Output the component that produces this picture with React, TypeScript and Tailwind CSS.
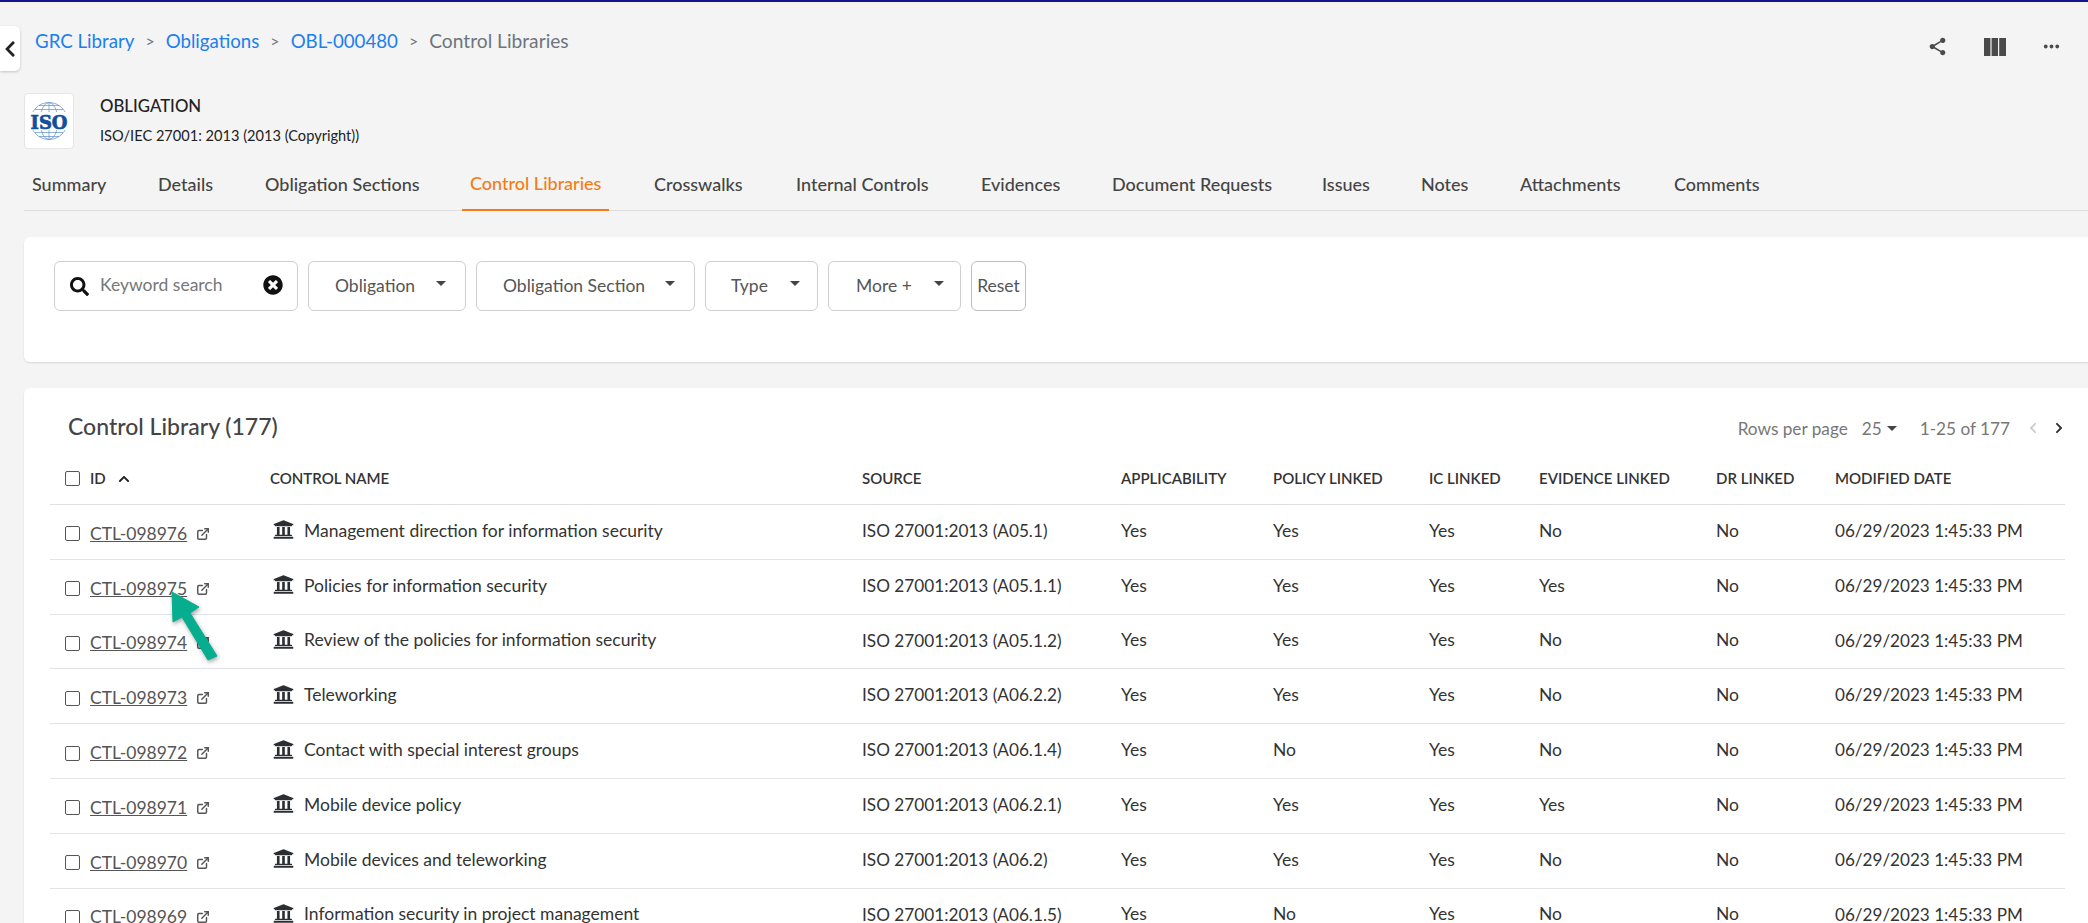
import React from "react";
import { FaUniversity, FaSearch, FaTimesCircle, FaChevronLeft, FaChevronRight, FaChevronUp } from "react-icons/fa";
import { MdShare, MdMoreHoriz } from "react-icons/md";
import { ExternalLink } from "lucide-react";

const cols = "grid grid-cols-[205px_592px_259px_152px_156px_110px_177px_119px_1fr] items-center";

const rows = [
  ["CTL-098976", "Management direction for information security", "ISO 27001:2013 (A05.1)", "Yes", "Yes", "Yes", "No", "No"],
  ["CTL-098975", "Policies for information security", "ISO 27001:2013 (A05.1.1)", "Yes", "Yes", "Yes", "Yes", "No"],
  ["CTL-098974", "Review of the policies for information security", "ISO 27001:2013 (A05.1.2)", "Yes", "Yes", "Yes", "No", "No"],
  ["CTL-098973", "Teleworking", "ISO 27001:2013 (A06.2.2)", "Yes", "Yes", "Yes", "No", "No"],
  ["CTL-098972", "Contact with special interest groups", "ISO 27001:2013 (A06.1.4)", "Yes", "No", "Yes", "No", "No"],
  ["CTL-098971", "Mobile device policy", "ISO 27001:2013 (A06.2.1)", "Yes", "Yes", "Yes", "Yes", "No"],
  ["CTL-098970", "Mobile devices and teleworking", "ISO 27001:2013 (A06.2)", "Yes", "Yes", "Yes", "No", "No"],
  ["CTL-098969", "Information security in project management", "ISO 27001:2013 (A06.1.5)", "Yes", "No", "Yes", "No", "No"],
];

const tabs = [
  ["Summary", "w-[126px]"],
  ["Details", "w-[107px]"],
  ["Obligation Sections", "w-[205px]"],
  ["Control Libraries", "w-[184px]"],
  ["Crosswalks", "w-[142px]"],
  ["Internal Controls", "w-[185px]"],
  ["Evidences", "w-[131px]"],
  ["Document Requests", "w-[210px]"],
  ["Issues", "w-[99px]"],
  ["Notes", "w-[99px]"],
  ["Attachments", "w-[154px]"],
  ["Comments", "w-[120px]"],
];

function Caret() {
  return <span className="block w-0 h-0 border-l-[5px] border-r-[5px] border-t-[5px] border-l-transparent border-r-transparent border-t-[#444]" />;
}

function FilterBtn({ label, w, pl, gap }: { label: string; w: string; pl: string; gap: string }) {
  return (
    <div className={`${w} ${pl} h-[50px] flex items-center bg-white border border-[#cfcfcf] rounded-[6px] text-[17.5px] text-[#555]`}>
      <span className={gap}>{label}</span>
      <span className="mb-[5px]"><Caret /></span>
    </div>
  );
}

function Box() {
  return <span className="w-[15px] h-[15px] border-[1.5px] border-[#555] rounded-[2px] shrink-0 bg-white" />;
}

function IsoLogo() {
  return (
    <svg width="38" height="40" viewBox="0 0 38 40">
      <g fill="none" stroke="#5b8fc9" strokeWidth="0.7">
        <circle cx="19" cy="20" r="18.5" />
        <ellipse cx="19" cy="20" rx="9" ry="18.5" />
        <path d="M19 1.5v37M5 8.5h28M5 31.5h28M9 4.5h20M9 35.5h20" />
      </g>
      <rect x="0" y="11" width="38" height="18" fill="#fff" />
      <text x="19" y="27.5" textAnchor="middle" fontFamily="'DejaVu Serif', serif" fontWeight="900" fontSize="19" fill="#0f4f9c" stroke="#0f4f9c" strokeWidth="0.7" textLength="37" lengthAdjust="spacingAndGlyphs">ISO</text>
    </svg>
  );
}

export default function App() {
  return (
    <div className="relative h-[923px] overflow-hidden bg-[#f4f4f4] border-t-2 border-[#14148a] font-['Lato',sans-serif]">
      <div className="h-[91px] flex items-start">
        <div className="mt-[24px] w-[20px] h-[45px] bg-white rounded-r-[5px] shadow-[0_1px_3px_rgba(0,0,0,0.2)] flex items-center justify-center text-[#222]">
          <FaChevronLeft size={18} />
        </div>
        <div className="ml-[15px] mt-[27px] flex items-center text-[18.7px] leading-[24px]">
          <span className="text-[#1a7ff0]">GRC Library</span>
          <span className="mx-[11px] text-[#6c757d] text-[16px]">&gt;</span>
          <span className="text-[#1a7ff0]">Obligations</span>
          <span className="mx-[11px] text-[#6c757d] text-[16px]">&gt;</span>
          <span className="text-[#1a7ff0]">OBL-000480</span>
          <span className="mx-[11px] text-[#6c757d] text-[16px]">&gt;</span>
          <span className="text-[#6c757d] text-[19.2px]">Control Libraries</span>
        </div>
        <div className="ml-auto mt-[33px] mr-[25px] flex items-center text-[#4a4a4a]">
          <MdShare size={21} />
          <svg className="ml-[36px]" width="22" height="18" viewBox="0 0 22 18" fill="#4a4a4a">
            <rect x="0" y="0" width="6.4" height="18" />
            <rect x="7.6" y="0" width="6.4" height="18" />
            <rect x="15.2" y="0" width="6.8" height="18" />
          </svg>
          <span className="ml-[34px]"><MdMoreHoriz size={23} /></span>
        </div>
      </div>

      <div className="ml-[24px] h-[55px] flex items-center">
        <div className="w-[50px] h-[56px] bg-white border border-[#e6e6e6] rounded-[4px] flex items-center justify-center">
          <IsoLogo />
        </div>
        <div className="ml-[26px] text-[#222]">
          <div className="text-[16.8px] leading-[20px] font-medium">OBLIGATION</div>
          <div className="mt-[11px] text-[14.6px] leading-[18px]">ISO/IEC 27001: 2013 (2013 (Copyright))</div>
        </div>
      </div>

      <div className="ml-[24px] mt-[10px] h-[53px] flex border-b border-[#dedede] text-[18px] font-medium text-[#444]">
        {tabs.map(([t, w]) => (
          <div key={t} className={`${w} shrink-0 h-[53px]`}>
            <div className={`inline-flex items-center h-[53px] px-[8px] ${t === "Control Libraries" ? "text-[#f57c14] border-b-2 border-[#f57c14]" : ""}`}>{t}</div>
          </div>
        ))}
      </div>

      <div className="ml-[24px] mt-[26px] h-[125px] bg-white rounded-l-[6px] shadow-[0_1px_2px_rgba(0,0,0,0.12)] pt-[24px] pl-[30px] flex items-start gap-[10px]">
        <div className="w-[244px] h-[50px] border border-[#cfcfcf] rounded-[6px] flex items-center pl-[15px] pr-[14px] text-[#111]">
          <FaSearch size={19} />
          <span className="ml-[11px] text-[17.5px] text-[#777] mb-[1px]">Keyword search</span>
          <span className="ml-auto mb-[3px]"><FaTimesCircle size={20} /></span>
        </div>
        <FilterBtn label="Obligation" w="w-[158px]" pl="pl-[26px]" gap="mr-[21px]" />
        <FilterBtn label="Obligation Section" w="w-[219px]" pl="pl-[26px]" gap="mr-[20px]" />
        <FilterBtn label="Type" w="w-[113px]" pl="pl-[25px]" gap="mr-[22px]" />
        <FilterBtn label="More +" w="w-[133px]" pl="pl-[27px]" gap="mr-[22px]" />
        <div className="w-[55px] h-[50px] border border-[#bdbdbd] rounded-[6px] flex items-center justify-center text-[17.5px] text-[#555]">Reset</div>
      </div>

      <div className="ml-[24px] mt-[26px] h-[600px] bg-white rounded-l-[6px] shadow-[0_1px_2px_rgba(0,0,0,0.12)] pl-[26px] pr-[23px]">
        <div className="h-[65px] flex items-center pl-[18px] pt-[12px]">
          <span className="text-[23px] font-medium text-[#444]">Control Library (177)</span>
          <div className="ml-auto mt-[4px] flex items-center text-[17.2px] text-[#777]">
            <span>Rows per page</span>
            <span className="ml-[14px]">25</span>
            <span className="ml-[5px]"><Caret /></span>
            <span className="ml-[23px]">1-25 of 177</span>
            <FaChevronLeft size={12} className="ml-[17px] text-[#ccc]" />
            <FaChevronRight size={12} className="ml-[14px] text-[#333]" />
          </div>
        </div>
        <div className={`${cols} h-[52px] pl-[15px] border-b border-[#dfdfe6] text-[15px] font-semibold text-[#333]`}>
          <div className="flex items-center">
            <Box />
            <span className="ml-[10px]">ID</span>
            <FaChevronUp size={12} className="ml-[12px] text-[#222]" />
          </div>
          <div>CONTROL NAME</div>
          <div>SOURCE</div>
          <div>APPLICABILITY</div>
          <div>POLICY LINKED</div>
          <div>IC LINKED</div>
          <div>EVIDENCE LINKED</div>
          <div>DR LINKED</div>
          <div>MODIFIED DATE</div>
        </div>
        {rows.map((r) => (
          <div key={r[0]} className={`${cols} h-[54.8px] pb-[2px] pl-[15px] border-b border-[#e3e3e8] text-[17.5px] text-[#333]`}>
            <div className="flex items-center pt-[6px]">
              <Box />
              <span className="ml-[10px] underline text-[#555]">{r[0]}</span>
              <ExternalLink size={14} className="ml-[9px] text-[#555]" strokeWidth={2.5} />
            </div>
            <div className="flex items-center">
              <FaUniversity size={21} className="ml-[3px] text-[#2b2f33] mb-[2px]" />
              <span className="ml-[10px]">{r[1]}</span>
            </div>
            <div className="text-[17.2px]">{r[2]}</div>
            <div>{r[3]}</div>
            <div>{r[4]}</div>
            <div>{r[5]}</div>
            <div>{r[6]}</div>
            <div>{r[7]}</div>
            <div className="text-[17.1px]">06/29/2023 1:45:33 PM</div>
          </div>
        ))}
      </div>

      <svg className="absolute left-[160px] top-[580px] drop-shadow-[1px_2px_2px_rgba(0,0,0,0.35)]" width="70" height="90" viewBox="160 582 70 90">
        <path d="M172 592 L199 607 L190 613 L217 656 L208 660 L182 617 L173 622 Z" fill="#06ae8f" stroke="#06ae8f" strokeWidth="1" strokeLinejoin="round" />
      </svg>
    </div>
  );
}
